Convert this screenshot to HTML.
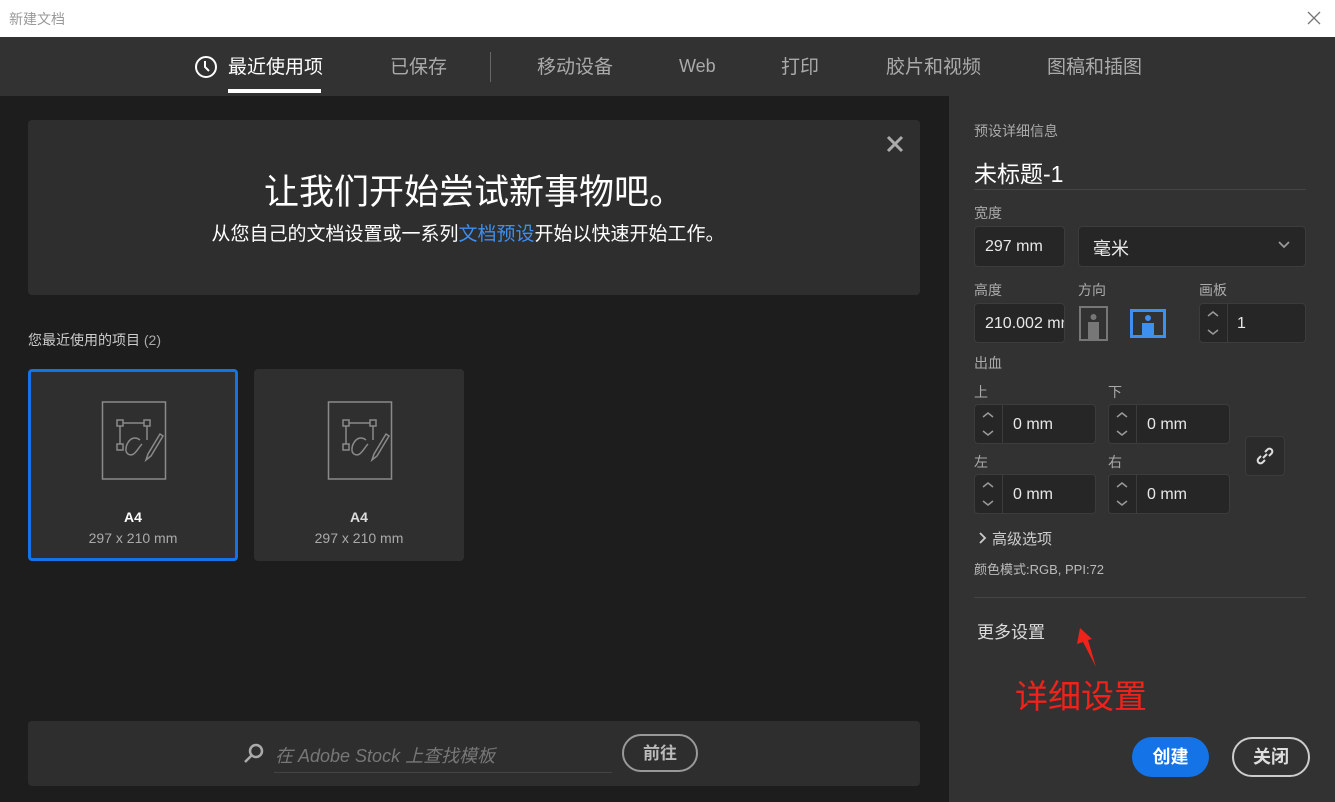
<!DOCTYPE html>
<html><head><meta charset="utf-8"><style>
*{margin:0;padding:0;box-sizing:border-box}
body{width:1335px;height:802px;overflow:hidden;background:#1d1d1d;font-family:"Liberation Sans","Noto Sans CJK SC",sans-serif;position:relative;color:#ccc}
.a{position:absolute}
.t{white-space:nowrap}
.inp{position:absolute;background:#262626;border:1px solid #3c3c3c;border-radius:4px;color:#e8e8e8;font-size:16px}
.spin{position:absolute;left:0;top:0;bottom:0;width:28px;border-right:1px solid #3c3c3c}
.lbl{position:absolute;font-size:14px;color:#aaa;white-space:nowrap}
</style></head><body>
<div class="a" style="left:0;top:0;width:1335px;height:37px;background:#fff"></div>
<div class="a t" style="left:9px;top:9px;font-size:14px;color:#999">新建文档</div>
<svg class="a" style="left:1307px;top:11px" width="14" height="14"><path d="M1 1L13 13M13 1L1 13" stroke="#777" stroke-width="1.3"/></svg>
<div class="a" style="left:0;top:37px;width:1335px;height:59px;background:#323232"></div>
<svg class="a" style="left:194px;top:55px" width="24" height="24"><circle cx="12" cy="12" r="10" stroke="#fff" stroke-width="2" fill="none"/><path d="M11 6V12L15 16" stroke="#fff" stroke-width="2" fill="none"/></svg>
<div class="a t" style="left:228px;top:52px;font-size:19px;color:#fff">最近使用项</div>
<div class="a" style="left:228px;top:89px;width:93px;height:4px;background:#fff"></div>
<div class="a t" style="left:390px;top:52px;font-size:19px;color:#aaa">已保存</div>
<div class="a" style="left:490px;top:52px;width:1px;height:30px;background:#666"></div>
<div class="a t" style="left:537px;top:52px;font-size:19px;color:#aaa">移动设备</div>
<div class="a t" style="left:679px;top:56px;font-size:18px;color:#aaa">Web</div>
<div class="a t" style="left:781px;top:52px;font-size:19px;color:#aaa">打印</div>
<div class="a t" style="left:886px;top:52px;font-size:19px;color:#aaa">胶片和视频</div>
<div class="a t" style="left:1047px;top:52px;font-size:19px;color:#aaa">图稿和插图</div>

<div class="a" style="left:28px;top:120px;width:892px;height:175px;background:#2e2e2e;border-radius:4px"></div>
<svg class="a" style="left:886px;top:135px" width="18" height="18"><path d="M2 2L16 16M16 2L2 16" stroke="#aaa" stroke-width="3"/></svg>
<div class="a t" style="left:28px;width:892px;text-align:center;top:164px;font-size:35px;color:#fff">让我们开始尝试新事物吧。</div>
<div class="a t" style="left:22px;width:892px;text-align:center;top:219px;font-size:19px;color:#fff">从您自己的文档设置或一系列<span style="color:#3d8ff0">文档预设</span>开始以快速开始工作。</div>

<div class="a t" style="left:28px;top:330px;font-size:14px;color:#ccc">您最近使用的项目 <span style="color:#aaa">(2)</span></div>
<div class="a" style="left:28px;top:369px;width:210px;height:192px;background:#2f2f2f;border:3px solid #1473e6;border-radius:4px"></div>
<div class="a" style="left:254px;top:369px;width:210px;height:192px;background:#2f2f2f;border-radius:4px"></div>
<svg class="a" style="left:100px;top:400px" width="68" height="82" viewBox="0 0 68 82" fill="none" stroke="#8a8a8a" stroke-width="1.5"><rect x="2.5" y="2" width="63" height="77"/><rect x="17" y="20" width="6" height="6"/><rect x="44" y="20" width="6" height="6"/><rect x="17" y="44" width="6" height="6"/><path d="M23 23H44M20 26V44M47 26V40"/><path d="M40 40C30 32 22 50 28 54C34 58 38 48 42 44"/><path d="M60 34L48 54L46 60L51 56L63 36Z"/></svg>
<svg class="a" style="left:326px;top:400px" width="68" height="82" viewBox="0 0 68 82" fill="none" stroke="#8a8a8a" stroke-width="1.5"><rect x="2.5" y="2" width="63" height="77"/><rect x="17" y="20" width="6" height="6"/><rect x="44" y="20" width="6" height="6"/><rect x="17" y="44" width="6" height="6"/><path d="M23 23H44M20 26V44M47 26V40"/><path d="M40 40C30 32 22 50 28 54C34 58 38 48 42 44"/><path d="M60 34L48 54L46 60L51 56L63 36Z"/></svg>
<div class="a t" style="left:28px;width:210px;text-align:center;top:509px;font-size:14px;font-weight:bold;color:#fff">A4</div>
<div class="a t" style="left:28px;width:210px;text-align:center;top:530px;font-size:14px;color:#aaa">297 x 210 mm</div>
<div class="a t" style="left:254px;width:210px;text-align:center;top:509px;font-size:14px;font-weight:bold;color:#ddd">A4</div>
<div class="a t" style="left:254px;width:210px;text-align:center;top:530px;font-size:14px;color:#aaa">297 x 210 mm</div>

<div class="a" style="left:28px;top:721px;width:892px;height:65px;background:#2e2e2e;border-radius:4px"></div>
<svg class="a" style="left:242px;top:741px" width="24" height="24" fill="none" stroke="#aaa" stroke-width="2.5"><circle cx="14" cy="10" r="6"/><path d="M9.5 14.5L3 21"/></svg>
<div class="a t" style="left:275px;top:742px;font-size:18px;color:#777;font-style:italic">在 Adobe Stock 上查找模板</div>
<div class="a" style="left:274px;top:772px;width:338px;height:1px;background:#444"></div>
<div class="a t" style="left:622px;top:734px;width:76px;height:38px;border:2px solid #999;border-radius:19px;text-align:center;line-height:36px;font-size:17px;font-weight:bold;color:#bbb">前往</div>

<div class="a" style="left:949px;top:96px;width:386px;height:706px;background:#323232"></div>
<div class="lbl" style="left:974px;top:121px">预设详细信息</div>
<div class="a t" style="left:974px;top:155px;font-size:23px;color:#fff">未标题-1</div>
<div class="a" style="left:974px;top:189px;width:332px;height:1px;background:#454545"></div>
<div class="lbl" style="left:974px;top:203px">宽度</div>
<div class="inp" style="left:974px;top:226px;width:91px;height:41px;padding:11px 0 0 10px">297 mm</div>
<div class="inp" style="left:1078px;top:226px;width:228px;height:41px;padding:8px 0 0 14px;font-size:18px">毫米</div>
<svg class="a" style="left:1277px;top:240px" width="14" height="10" fill="none" stroke="#999" stroke-width="1.8"><path d="M2 2L7 7L12 2"/></svg>
<div class="lbl" style="left:974px;top:280px">高度</div>
<div class="lbl" style="left:1078px;top:280px">方向</div>
<div class="lbl" style="left:1199px;top:280px">画板</div>
<div class="inp" style="left:974px;top:303px;width:91px;height:40px;padding:11px 0 0 10px;overflow:hidden;white-space:nowrap">210.002 mm</div>
<svg class="a" style="left:1079px;top:306px" width="29" height="35"><rect x="1" y="1" width="27" height="33" fill="none" stroke="#777" stroke-width="2"/><circle cx="14.5" cy="11" r="3" fill="#777"/><path d="M9 16H20V34H9Z" fill="#777"/></svg>
<svg class="a" style="left:1130px;top:309px" width="36" height="29"><rect x="1.5" y="1.5" width="33" height="26" fill="none" stroke="#3d90f0" stroke-width="3"/><circle cx="18" cy="9" r="3" fill="#3d90f0"/><path d="M12 14H24V27H12Z" fill="#3d90f0"/></svg>
<div class="inp" style="left:1199px;top:303px;width:107px;height:40px;padding:11px 0 0 37px"><div class="spin"></div>1</div>
<div class="lbl" style="left:974px;top:353px">出血</div>
<div class="lbl" style="left:974px;top:382px">上</div>
<div class="lbl" style="left:1108px;top:382px">下</div>
<div class="inp" style="left:974px;top:404px;width:122px;height:40px;padding:11px 0 0 38px"><div class="spin"></div>0 mm</div>
<div class="inp" style="left:1108px;top:404px;width:122px;height:40px;padding:11px 0 0 38px"><div class="spin"></div>0 mm</div>
<div class="lbl" style="left:974px;top:452px">左</div>
<div class="lbl" style="left:1108px;top:452px">右</div>
<div class="inp" style="left:974px;top:474px;width:122px;height:40px;padding:11px 0 0 38px"><div class="spin"></div>0 mm</div>
<div class="inp" style="left:1108px;top:474px;width:122px;height:40px;padding:11px 0 0 38px"><div class="spin"></div>0 mm</div>
<svg class="a" style="left:979px;top:409px" width="18" height="30" fill="none" stroke="#999" stroke-width="1.5"><path d="M4 8L9 4L14 8M4 22L9 26L14 22"/></svg>
<svg class="a" style="left:1113px;top:409px" width="18" height="30" fill="none" stroke="#999" stroke-width="1.5"><path d="M4 8L9 4L14 8M4 22L9 26L14 22"/></svg>
<svg class="a" style="left:979px;top:479px" width="18" height="30" fill="none" stroke="#999" stroke-width="1.5"><path d="M4 8L9 4L14 8M4 22L9 26L14 22"/></svg>
<svg class="a" style="left:1113px;top:479px" width="18" height="30" fill="none" stroke="#999" stroke-width="1.5"><path d="M4 8L9 4L14 8M4 22L9 26L14 22"/></svg>
<svg class="a" style="left:1204px;top:308px" width="18" height="30" fill="none" stroke="#999" stroke-width="1.5"><path d="M4 8L9 4L14 8M4 22L9 26L14 22"/></svg>
<div class="a" style="left:1245px;top:436px;width:40px;height:40px;background:#2b2b2b;border:1px solid #3c3c3c;border-radius:4px"></div>
<svg class="a" style="left:1255px;top:446px" width="20" height="20" fill="none" stroke="#ddd" stroke-width="2"><path d="M8 12L12 8M6 10L3.5 12.5a2.8 2.8 0 004 4L10 14M10 6L12.5 3.5a2.8 2.8 0 014 4L14 10"/></svg>
<svg class="a" style="left:977px;top:531px" width="10" height="14" fill="none" stroke="#ccc" stroke-width="1.8"><path d="M3 2L8 7L3 12"/></svg>
<div class="a t" style="left:992px;top:528px;font-size:15px;color:#ccc">高级选项</div>
<div class="a t" style="left:974px;top:559px;font-size:13px;color:#bbb">颜色模式:RGB, PPI:72</div>
<div class="a" style="left:974px;top:597px;width:332px;height:1px;background:#454545"></div>
<div class="a t" style="left:977px;top:618px;font-size:17px;color:#ddd">更多设置</div>
<svg class="a" style="left:1074px;top:626px" width="26" height="44"><path d="M6 2L3 18L9 16L22 41L14 14L18 13Z" fill="#f0221a"/></svg>
<div class="a t" style="left:1015px;top:670px;font-size:33px;color:#f0221a">详细设置</div>
<div class="a t" style="left:1132px;top:737px;width:77px;height:40px;background:#1473e6;border-radius:20px;text-align:center;line-height:40px;font-size:18px;font-weight:bold;color:#fff">创建</div>
<div class="a t" style="left:1232px;top:737px;width:78px;height:40px;border:2px solid #ccc;border-radius:20px;text-align:center;line-height:36px;font-size:18px;font-weight:bold;color:#ddd">关闭</div>
</body></html>
